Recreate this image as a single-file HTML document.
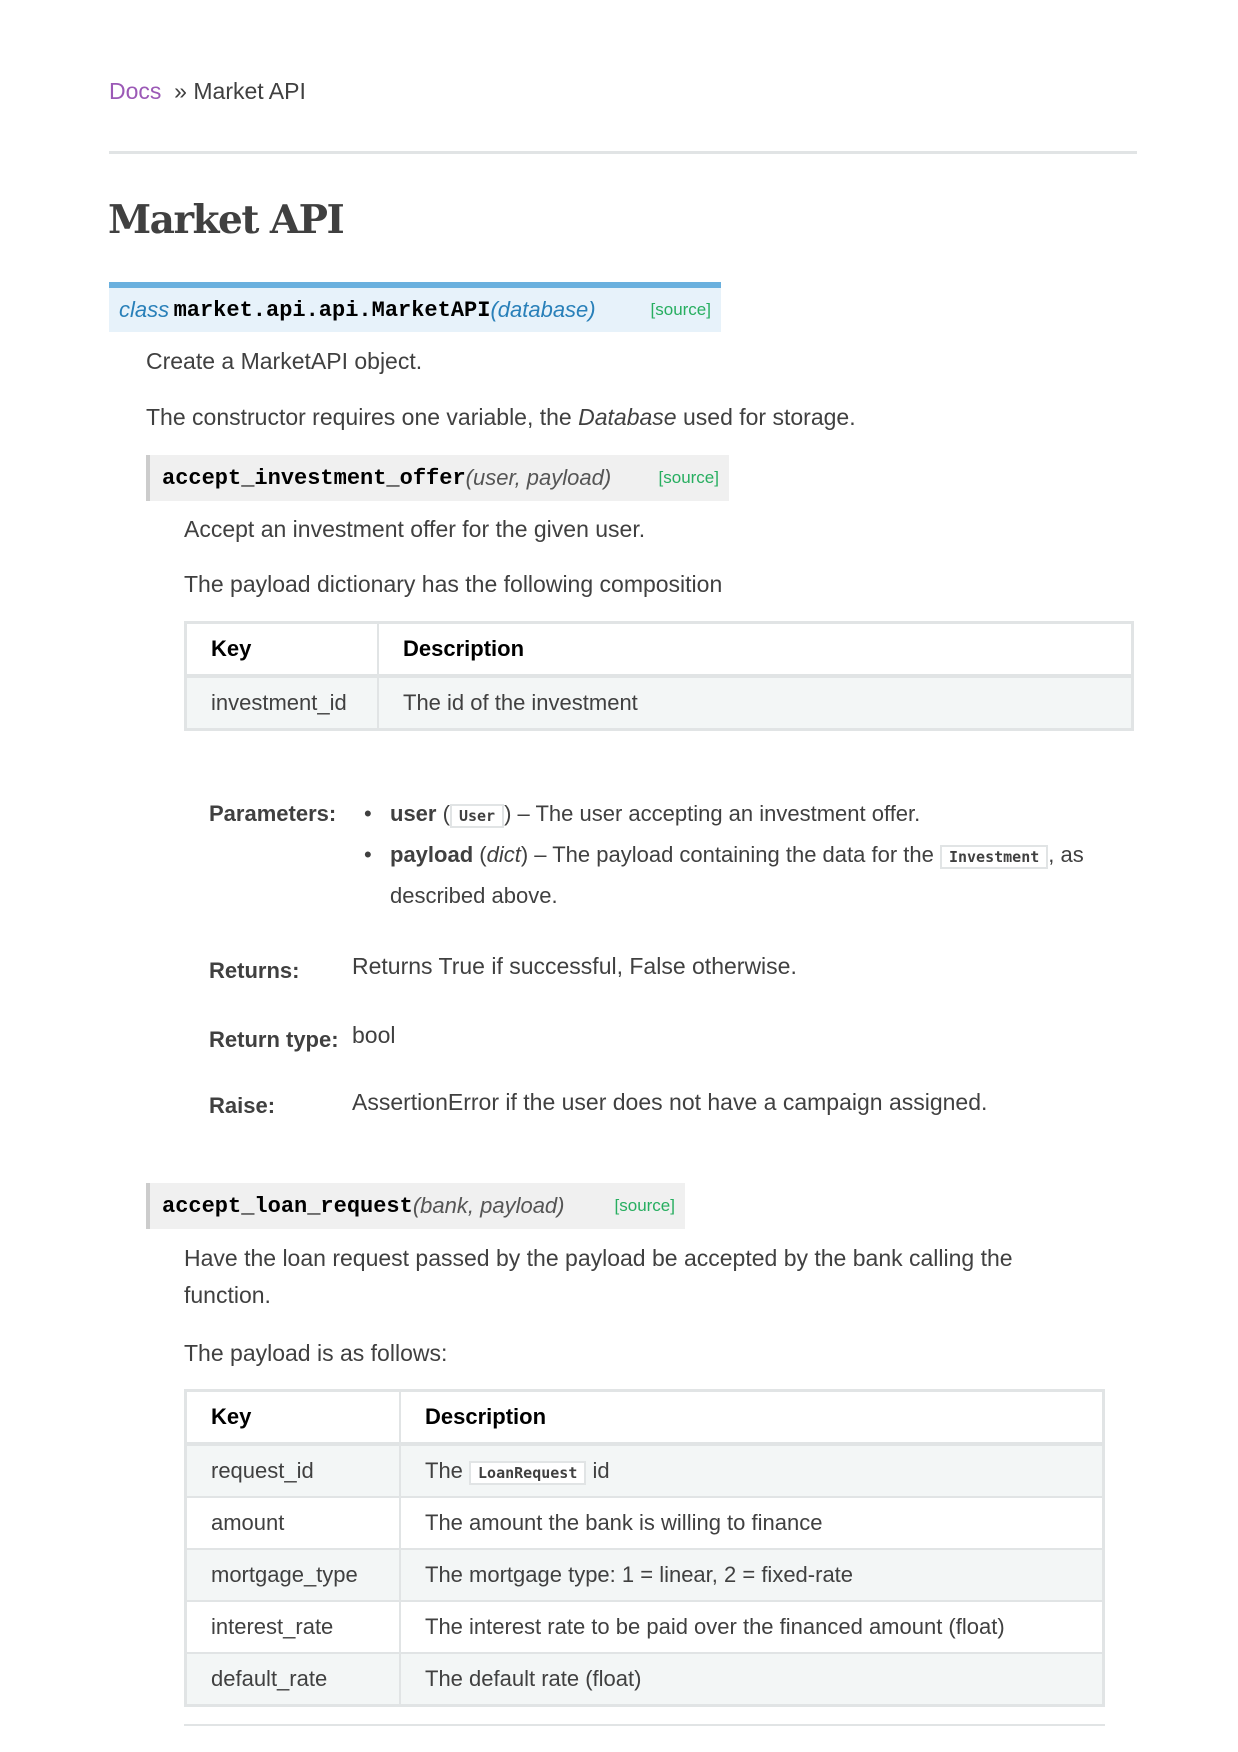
<!DOCTYPE html>
<html><head><meta charset="utf-8"><style>
body{margin:0;width:1238px;height:1752px;background:#fff;font-family:"Liberation Sans",sans-serif;color:#404040;position:relative;overflow:hidden}
.a{position:absolute;white-space:nowrap;font-size:23px;line-height:30px}
.mono{font-family:"Liberation Mono","DejaVu Sans Mono",monospace}
.sig{position:absolute;display:flex;align-items:center}
.src{color:#27ae60;font-size:17px;position:absolute;right:10px}
code{font-family:"DejaVu Sans Mono",monospace;font-size:15px;font-weight:bold;border:2px solid #e1e4e5;background:#fff;padding:1px 7px;color:#404040}
table{position:absolute;border-collapse:collapse;font-size:22px;border:3px solid #e1e4e5}
td,th{border:2px solid #e1e4e5;text-align:left;padding:0 24px;height:50px}
th{font-weight:bold;color:#000;border-bottom:4px solid #e1e4e5}
tr.o td{background:#f3f6f6}
b{color:#404040}
</style></head><body>
<div class="a" style="left:109px;top:76px"><span style="color:#9b59b6">Docs</span> &nbsp;» Market API</div>
<div style="position:absolute;left:109px;top:151px;width:1028px;height:3px;background:#e1e4e5"></div>
<div class="a" style="left:108px;top:194px;font-family:'DejaVu Serif',serif;font-weight:bold;font-size:39px;line-height:52px;color:#404040;letter-spacing:-1.5px">Market API</div>

<div class="sig" style="left:109px;top:282px;width:612px;height:50px;background:#e7f2fa;border-top:6px solid #6ab0de;box-sizing:border-box;padding-left:10px">
<span style="color:#2980b9;font-style:italic;font-size:22px">class</span>&nbsp;<span class="mono" style="font-weight:bold;font-size:22px;color:#000">market.api.api.MarketAPI</span><span style="color:#2980b9;font-style:italic;font-size:22px">(database)</span><span class="src">[source]</span></div>

<div class="a" style="left:146px;top:346px">Create a MarketAPI object.</div>
<div class="a" style="left:146px;top:402px">The constructor requires one variable, the <i>Database</i> used for storage.</div>

<div class="sig" style="left:146px;top:455px;width:583px;height:46px;background:#f0f0f0;border-left:4px solid #ccc;box-sizing:border-box;padding-left:12px">
<span class="mono" style="font-weight:bold;font-size:22px;color:#000">accept_investment_offer</span><span style="font-style:italic;font-size:22px;color:#555">(user, payload)</span><span class="src">[source]</span></div>

<div class="a" style="left:184px;top:514px">Accept an investment offer for the given user.</div>
<div class="a" style="left:184px;top:569px">The payload dictionary has the following composition</div>

<table style="left:184px;top:621px;width:950px">
<tr><th style="width:142px">Key</th><th>Description</th></tr>
<tr class="o"><td>investment_id</td><td>The id of the investment</td></tr>
</table>

<div class="a" style="left:209px;top:799px;font-size:22px;font-weight:bold">Parameters:</div>
<div class="a" style="left:364px;top:799px;font-size:22px">•</div>
<div class="a" style="left:390px;top:799px;font-size:22px"><b>user</b> (<code>User</code>) – The user accepting an investment offer.</div>
<div class="a" style="left:364px;top:840px;font-size:22px">•</div>
<div class="a" style="left:390px;top:840px;font-size:22px"><b>payload</b> (<i>dict</i>) – The payload containing the data for the <code>Investment</code>, as</div>
<div class="a" style="left:390px;top:881px;font-size:22px">described above.</div>

<div class="a" style="left:209px;top:956px;font-size:22px;font-weight:bold">Returns:</div>
<div class="a" style="left:352px;top:951px">Returns True if successful, False otherwise.</div>
<div class="a" style="left:209px;top:1025px;font-size:22px;font-weight:bold">Return type:</div>
<div class="a" style="left:352px;top:1020px">bool</div>
<div class="a" style="left:209px;top:1091px;font-size:22px;font-weight:bold">Raise:</div>
<div class="a" style="left:352px;top:1087px">AssertionError if the user does not have a campaign assigned.</div>

<div class="sig" style="left:146px;top:1183px;width:539px;height:46px;background:#f0f0f0;border-left:4px solid #ccc;box-sizing:border-box;padding-left:12px">
<span class="mono" style="font-weight:bold;font-size:22px;color:#000">accept_loan_request</span><span style="font-style:italic;font-size:22px;color:#555">(bank, payload)</span><span class="src">[source]</span></div>

<div class="a" style="left:184px;top:1243px">Have the loan request passed by the payload be accepted by the bank calling the</div>
<div class="a" style="left:184px;top:1280px">function.</div>
<div class="a" style="left:184px;top:1338px">The payload is as follows:</div>

<table style="left:184px;top:1389px;width:921px">
<tr><th style="width:164px">Key</th><th>Description</th></tr>
<tr class="o"><td>request_id</td><td>The <code>LoanRequest</code> id</td></tr>
<tr><td>amount</td><td>The amount the bank is willing to finance</td></tr>
<tr class="o"><td>mortgage_type</td><td>The mortgage type: 1 = linear, 2 = fixed-rate</td></tr>
<tr><td>interest_rate</td><td>The interest rate to be paid over the financed amount (float)</td></tr>
<tr class="o"><td>default_rate</td><td>The default rate (float)</td></tr>
</table>
<div style="position:absolute;left:184px;top:1724px;width:921px;height:2px;background:#e1e4e5"></div>
</body></html>
